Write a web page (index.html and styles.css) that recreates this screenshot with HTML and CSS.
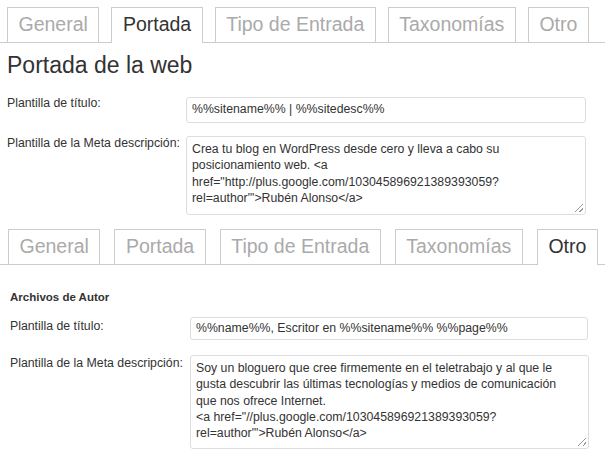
FILE: index.html
```
<!DOCTYPE html>
<html lang="es">
<head>
    <meta charset="UTF-8">
    <title>WordPress SEO - Títulos y metas</title>
    <link rel="stylesheet" href="styles.css">
</head>
<body>
    <div class="panel panel-home">
        <div class="nav-tabs">
            <a class="nav-tab">General</a>
            <a class="nav-tab nav-tab-active">Portada</a>
            <a class="nav-tab">Tipo de Entrada</a>
            <a class="nav-tab">Taxonomías</a>
            <a class="nav-tab">Otro</a>
        </div>

        <h2>Portada de la web</h2>

        <div class="field field-first">
            <label>Plantilla de título:</label>
            <div class="input">%%sitename%% | %%sitedesc%%</div>
        </div>
        <div class="field">
            <label>Plantilla de la Meta descripción:</label>
            <div class="textarea">
                Crea tu blog en WordPress desde cero y lleva a cabo su<br>
                posicionamiento web. &lt;a<br>
                href="http://plus.google.com/103045896921389393059?<br>
                rel=author"'&gt;Rubén Alonso&lt;/a&gt;
                <span class="grip"></span>
            </div>
        </div>
    </div>

    <div class="panel panel-other">
        <div class="nav-tabs">
            <a class="nav-tab">General</a>
            <a class="nav-tab">Portada</a>
            <a class="nav-tab">Tipo de Entrada</a>
            <a class="nav-tab">Taxonomías</a>
            <a class="nav-tab nav-tab-active">Otro</a>
        </div>

        <h4>Archivos de Autor</h4>

        <div class="field field-first">
            <label>Plantilla de título:</label>
            <div class="input">%%name%%, Escritor en %%sitename%% %%page%%</div>
        </div>
        <div class="field">
            <label>Plantilla de la Meta descripción:</label>
            <div class="textarea">
                Soy un bloguero que cree firmemente en el teletrabajo y al que le<br>
                gusta descubrir las últimas tecnologías y medios de comunicación<br>
                que nos ofrece Internet.<br>
                &lt;a href="//plus.google.com/103045896921389393059?<br>
                rel=author"'&gt;Rubén Alonso&lt;/a&gt;
                <span class="grip"></span>
            </div>
        </div>
    </div>
</body>
</html>
```

FILE: styles.css
```
body {
    margin: 0;
    font-family: "Liberation Sans", Arial, sans-serif;
    font-size: 12.3px;
    color: #333;
    background: #fff;
}
.panel {
    padding-top: 7px;
}
.panel-other {
    padding-top: 14px;
}

/* tabs */
.nav-tabs {
    display: flex;
    gap: 12px;
    padding-left: 7px;
    border-bottom: 1px solid #ccc;
}
.panel-other .nav-tabs {
    gap: 14px;
    padding-left: 8px;
}
.nav-tab {
    border: 1px solid #ccc;
    border-bottom: none;
    padding: 4px 10.5px 6px;
    font-size: 19.5px;
    line-height: 24px;
    color: #aaa;
    background: #fff;
}
.nav-tab-active {
    color: #333;
    margin-bottom: -1px;
    padding-bottom: 7px;
}

h2 {
    margin: 8px 0 0 7px;
    font-size: 23px;
    font-weight: normal;
    line-height: 29px;
    color: #333;
}
h4 {
    margin: 25px 0 0 10px;
    font-size: 11.5px;
    line-height: 14px;
    font-weight: bold;
    color: #333;
}

/* form rows */
.field {
    display: flex;
    align-items: flex-start;
    margin-top: 12px;
    padding-left: 7px;
}
.field-first {
    margin-top: 15px;
}
.field label {
    width: 179px;
    flex: none;
    line-height: 16px;
}
.input, .textarea {
    box-sizing: border-box;
    width: 400px;
    border: 1px solid #ddd;
    border-radius: 3px;
    padding: 0 5px;
    background: #fff;
}
.input {
    height: 26px;
    margin-top: 2px;
    padding-top: 3px;
    line-height: 16px;
}
.textarea {
    position: relative;
    height: 79px;
    margin-top: 1px;
    padding-top: 4px;
    line-height: 16.3px;
}

.panel-other .field {
    padding-left: 10px;
    margin-top: 14px;
}
.panel-other .field-first {
    margin-top: 13px;
}
.panel-other .field label {
    width: 180px;
    margin-top: 1px;
}
.panel-other .input {
    width: 398px;
    height: 23px;
    margin-top: 0;
    padding-top: 2px;
}
.panel-other .textarea {
    width: 399px;
    height: 94px;
    padding-top: 4px;
}

.grip {
    position: absolute;
    right: 2px;
    bottom: 2px;
    width: 8px;
    height: 8px;
    background: linear-gradient(135deg, transparent 45%, #999 45%, #999 55%, transparent 55%, transparent 75%, #999 75%, #999 85%, transparent 85%);
}
```
